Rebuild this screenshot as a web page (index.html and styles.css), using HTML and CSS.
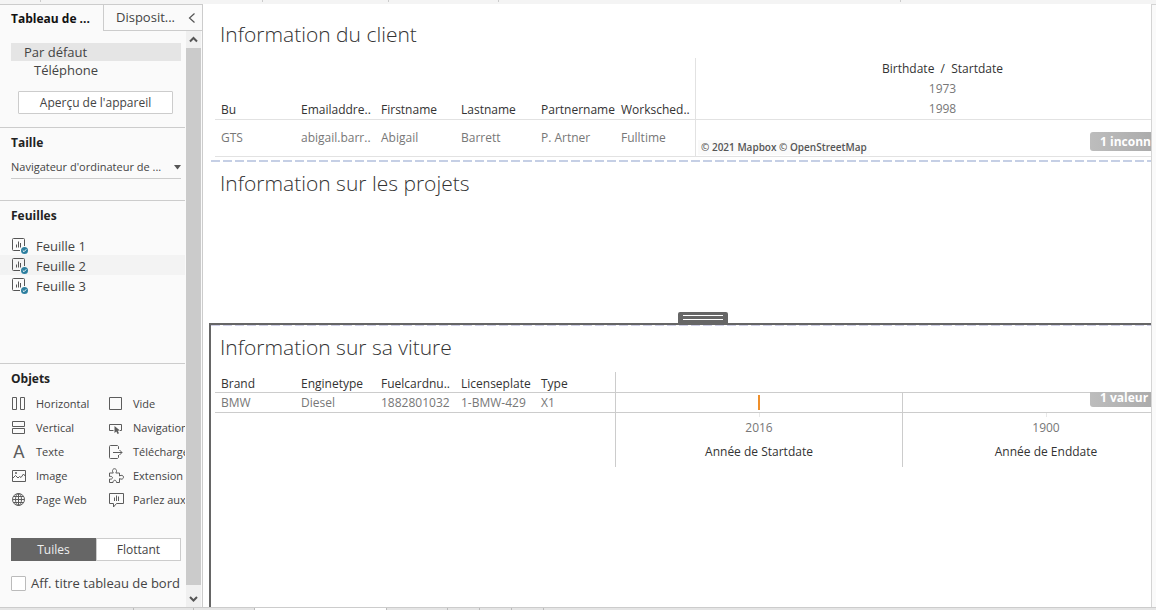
FILE: index.html
```html
<!DOCTYPE html>
<html lang="fr">
<head>
<meta charset="utf-8">
<title>Tableau de bord</title>
<link rel="stylesheet" href="styles.css">
</head>
<body>
<svg class="sprite" aria-hidden="true">
  <symbol id="sheet" viewBox="0 0 18 18">
    <path d="M9 13.500H2.500Q1.500 13.500 1.500 12.500V2.500Q1.500 1.500 2.500 1.500H12.500Q13.500 1.500 13.500 2.500V9" fill="none" stroke="#555"/>
    <path d="M5.500 10.500V7.500M7.500 10.500V4.500M9.500 10.500V6" fill="none" stroke="#555"/>
    <circle cx="13.500" cy="13.500" r="3.500" fill="#2d7f9f"/>
    <path d="M11.800 13.500L13 14.700L15.300 12.300" fill="none" stroke="#fff"/>
  </symbol>
</svg>
<div class="topstrip"><i class="w40"></i><i class="w222"></i><i class="w126"></i><i class="w110"></i><i class="w402"></i></div>
<div class="workspace">
  <aside class="sidebar">
    <div class="tabs">
      <button class="tab tab-on">Tableau de ...</button>
      <button class="tab tab-off">Disposit...</button>
      <button class="collapse" aria-label="Réduire"><svg width="8" height="10" viewBox="0 0 8 10"><path d="M6.500 .5L1.500 5L6.500 9.500" fill="none" stroke="#555" stroke-width="1.200"/></svg></button>
    </div>
    <div class="panel">
      <div class="content">
        <section class="devices">
          <button class="device device-on">Par défaut</button>
          <button class="device device-sub">Téléphone</button>
          <button class="preview">Aperçu de l'appareil</button>
        </section>
        <section class="size">
          <h2><label for="size">Taille</label></h2>
          <div class="selectbox">
            <select id="size"><option>Navigateur d'ordinateur de ...</option></select>
            <svg width="7" height="5" viewBox="0 0 7 5"><path d="M0 0H7L3.500 4.500Z" fill="#555"/></svg>
          </div>
        </section>
        <section class="sheets">
          <h2>Feuilles</h2>
          <button class="sheet"><svg width="18" height="18"><use href="#sheet"/></svg>Feuille 1</button>
          <button class="sheet sheet-on"><svg width="18" height="18"><use href="#sheet"/></svg>Feuille 2</button>
          <button class="sheet"><svg width="18" height="18"><use href="#sheet"/></svg>Feuille 3</button>
        </section>
        <section class="objects">
          <h2>Objets</h2>
          <div class="objgrid">
            <button class="obj"><svg width="16" height="16" viewBox="0 0 16 16"><path d="M1.500 1.500H5.500V13.500H1.500ZM9.500 1.500H13.500V13.500H9.500Z"/></svg>Horizontal</button>
            <button class="obj"><svg width="16" height="16" viewBox="0 0 16 16"><path d="M1.500 1.500H13.500V13.500H1.500Z"/></svg>Vide</button>
            <button class="obj"><svg width="16" height="16" viewBox="0 0 16 16"><path d="M1.500 1.500H13.500V6.500H1.500ZM1.500 8.500H13.500V13.500H1.500Z"/></svg>Vertical</button>
            <button class="obj"><svg width="16" height="16" viewBox="0 0 16 16"><path d="M5.500 10.500H1.500V4.500H13.500V10.500H12"/><path class="solid" d="M6.500 6L12 10.500L9.700 10.800L11 13.200L9.500 14L8.300 11.600L6.500 13Z"/></svg>Navigation</button>
            <button class="obj"><span class="glyph" aria-hidden="true">A</span>Texte</button>
            <button class="obj"><svg width="16" height="16" viewBox="0 0 16 16"><path d="M10.500 5V2.500L9.500 1.500H2.500Q1.500 1.500 1.500 2.500V13.500Q1.500 14.500 2.500 14.500H9.500L10.500 13.500V11M5 8.500H14M11.500 6L14 8.500L11.500 11"/></svg>Téléchargement</button>
            <button class="obj"><svg width="16" height="16" viewBox="0 0 16 16"><path d="M1.500 2.500H14.500V13.500H1.500ZM1.500 10.500L4.500 7.500L7 10L8.500 8.500L10 9.500L12.500 6L14.500 8.500"/><circle class="solid" cx="5" cy="5" r="1"/></svg>Image</button>
            <button class="obj"><svg width="16" height="16" viewBox="0 0 16 16"><path d="M1.500 5H5.300C3.500 2.500 5 .7 6.500 .7S9.500 2.500 7.800 5H11.500V8C13.500 6.500 15.500 7.500 15.500 9.200S13.500 12 11.500 10.500V14.500H8.500C8.500 11.500 5 11.500 5 14.500H1.500V11C5.500 12 5.500 7.500 1.500 8.500Z"/></svg>Extension</button>
            <button class="obj"><svg width="16" height="16" viewBox="0 0 16 16"><circle cx="7.500" cy="7.500" r="6"/><ellipse cx="7.500" cy="7.500" rx="3" ry="6"/><path d="M7.500 1.500V13.500M1.500 7.500H13.500M2.500 4.500H12.500M2.500 10.500H12.500"/></svg>Page Web</button>
            <button class="obj"><svg width="16" height="16" viewBox="0 0 16 16"><path d="M1.500 1.500H15.500V11.500H8.500L5.500 15V11.500H1.500ZM6.500 9V5.500M8.500 9V3.500M10.500 9V4.500"/></svg>Parlez aux données</button>
          </div>
          <div class="segment"><button class="seg seg-on">Tuiles</button><button class="seg">Flottant</button></div>
          <label class="check"><input type="checkbox">Aff. titre tableau de bord</label>
        </section>
      </div>
      <div class="scrollbar">
        <svg width="15" height="17" viewBox="0 0 15 17"><path d="M4 10.500L7.500 7L11 10.500" fill="none" stroke="#555" stroke-width="2"/></svg>
        <div class="thumb"></div>
        <svg width="15" height="22" viewBox="0 0 15 22"><path d="M4 12L7.500 15.500L11 12" fill="none" stroke="#555" stroke-width="2"/></svg>
      </div>
    </div>
  </aside>
  <main class="dashboard">
    <section class="zone client">
      <h1>Information du client</h1>
      <table class="grid light">
        <colgroup><col class="dim"><col class="dim"><col class="dim"><col class="dim"><col class="dim"><col class="dim"><col></colgroup>
        <thead><tr><th>Bu</th><th>Emailaddre..</th><th>Firstname</th><th>Lastname</th><th>Partnername</th><th>Worksched..</th>
          <th class="chart years">Birthdate&nbsp; /&nbsp; Startdate<span>1973</span><span>1998</span></th></tr></thead>
        <tbody><tr><td>GTS</td><td>abigail.barr..</td><td>Abigail</td><td>Barrett</td><td>P. Artner</td><td>Fulltime</td>
          <td class="chart map"><small>© 2021 Mapbox © OpenStreetMap</small></td></tr></tbody>
      </table>
      <span class="badge badge-client">1 inconnu</span>
    </section>
    <section class="zone projects">
      <h1>Information sur les projets</h1>
    </section>
    <section class="zone car">
      <div class="handle"></div>
      <div class="clip">
        <h1>Information sur sa viture</h1>
        <table class="grid dark">
          <colgroup><col class="dim"><col class="dim"><col class="dim"><col class="dim"><col class="dim"><col><col></colgroup>
          <thead><tr><th>Brand</th><th>Enginetype</th><th>Fuelcardnu..</th><th>Licenseplate</th><th>Type</th><th class="chart" colspan="2"></th></tr></thead>
          <tbody>
            <tr><td>BMW</td><td>Diesel</td><td>1882801032</td><td>1-BMW-429</td><td>X1</td><td class="chart mark"><div class="tick"></div></td><td class="chart"></td></tr>
            <tr class="axis"><td colspan="5"></td><td class="chart"><span>2016</span><b>Année de Startdate</b></td><td class="chart"><span>1900</span><b>Année de Enddate</b></td></tr>
          </tbody>
        </table>
        <span class="badge badge-car">1 valeur</span>
      </div>
    </section>
  </main>
  <div class="gutter"></div>
</div>
<div class="sheetstrip"><i class="s134"></i><i class="s60"></i><i class="s61"></i><i class="active"></i><i class="s61"></i><i class="s32"></i><i class="s32"></i><i class="s32"></i></div>
</body>
</html>
```
FILE: styles.css
```css
* { box-sizing: border-box; }
body {
  margin: 0;
  height: 100vh;
  display: flex;
  flex-direction: column;
  overflow: hidden;
  background: #fff;
  color: #444;
  font: 13px/20px "Open Sans", "Noto Sans", sans-serif;
}
button, select, input { font: inherit; color: inherit; margin: 0; }
button { border: 0; background: none; padding: 0; text-align: left; white-space: nowrap; }
h1, h2 { margin: 0; }
.sprite { position: absolute; width: 0; height: 0; }

.topstrip { display: flex; flex: none; height: 4px; background: #f4f4f4; }
.topstrip i { height: 2px; border-right: 1px solid #ccc; }
.w40 { width: 41px; }
.w222 { width: 222px; }
.w126 { width: 126px; }
.w110 { width: 110px; }
.w402 { width: 402px; }

.workspace { display: flex; flex: 1; min-height: 0; }
.gutter { width: 5px; flex: none; border: solid #d4d4d4; border-width: 1px 0 0 1px; background: #fafafa; }

.sidebar {
  width: 203px;
  flex: none;
  display: flex;
  flex-direction: column;
  background: #fafafa;
  border: solid #ccc;
  border-width: 1px 1px 0 0;
}
.tabs { display: flex; height: 26px; flex: none; }
.tab { line-height: 25px; }
.tab-on { width: 103px; padding-left: 11px; font-weight: 700; color: #111; font-size: 12px; }
.tab-off { flex: 1; padding-left: 12px; border: solid #ccc; border-width: 0 0 1px 1px; }
.collapse { width: 15px; padding-left: 1px; border-bottom: 1px solid #ccc; }
.panel { display: flex; flex: 1; min-height: 0; }
.content { flex: 1; min-width: 0; overflow: hidden; margin-right: 1px; }
.scrollbar { width: 16px; flex: none; display: flex; flex-direction: column; background: #f0f0f0; border-right: 1px solid #fafafa; }
.thumb { flex: 1; background: #cbcbcb; }
.scrollbar svg { display: block; flex: none; }

h2 { font-size: 12px; line-height: 20px; font-weight: 700; color: #222; padding-left: 11px; }
.devices { padding: 12px 4px 13px 11px; display: flex; flex-direction: column; }
.device { height: 18px; line-height: 18px; padding-left: 13px; font-size: 13px; }
.device-on { background: #e5e5e5; }
.device-sub { padding-left: 23px; }
.preview {
  height: 23px;
  margin: 12px 8px 0 7px;
  border: 1px solid #ccc;
  border-radius: 1px;
  background: #fff;
  text-align: center;
  font-size: 12px;
}
.size { border-top: 1px solid #ccc; height: 73px; padding-top: 5px; }
.selectbox {
  display: flex;
  align-items: center;
  margin: 3px 4px 0 11px;
  height: 23px;
  border-bottom: 1px solid #ccc;
}
.selectbox select { appearance: none; flex: 1; min-width: 0; border: 0; background: none; padding: 0; font-size: 11px; }
.sheets { border-top: 1px solid #ccc; height: 163px; padding-top: 5px; }
.sheets h2 { margin-bottom: 9px; }
.sheet { display: flex; align-items: center; width: 100%; height: 20px; padding: 1px 0 0 11px; gap: 7px; font-size: 13px; line-height: 16px; }
.sheet-on { background: #f3f3f3; }
.objects { border-top: 1px solid #ccc; padding-top: 5px; }
.objgrid { display: grid; grid-template-columns: 97px 1fr; margin: 3px 0 26px 11px; }
.obj { display: flex; align-items: center; height: 24px; gap: 9px; min-width: 0; overflow: hidden; font-size: 11px; }
.obj svg { flex: none; fill: none; stroke: #5c5c5c; }
.obj svg .solid { fill: #5c5c5c; stroke: none; }
.glyph { width: 16px; font: 18px/24px Roboto, sans-serif; color: #5c5c5c; padding-left: 2px; }
.segment { display: flex; margin: 0 4px 0 11px; }
.seg { flex: 1; height: 23px; text-align: center; border: 1px solid #ccc; background: #fff; font-size: 12px; }
.seg-on { background: #666; border-color: #666; color: #eee; }
.check { display: flex; align-items: center; gap: 5px; margin: 12px 0 0 11px; white-space: nowrap; font-size: 13px; }
.check input { appearance: none; flex: none; width: 15px; height: 15px; border: 1px solid #bbb; border-radius: 1px; background: #fff; }

.dashboard { flex: 1; min-width: 0; display: flex; flex-direction: column; padding-left: 6px; }
.zone { position: relative; }
.dashboard h1 { font-size: 21px; line-height: 26px; padding: 0 0 2px 9px; font-weight: 300; color: #333; }
.client, .projects { margin-left: 2px; padding-top: 17px; overflow: hidden; }
.client { height: 158px; background: repeating-linear-gradient(90deg, #c5cfe5 0 9px, #fff 9px 12px) 0 100% / 100% 2px no-repeat; }
.projects { height: 161px; padding-top: 8px; }
.car { flex: 1; min-height: 0; border: solid #666; border-width: 2px 0 0 2px; }
.clip {
  position: relative;
  height: 100%;
  overflow: hidden;
  padding-top: 9px;
  background: repeating-linear-gradient(90deg, #cfcfe6 0 9px, #fff 9px 12px) 0 0 / 100% 1px no-repeat;
}
.handle {
  position: absolute;
  left: 50%;
  top: -13px;
  width: 50px;
  height: 11px;
  margin-left: -3px;
  border: solid #666;
  border-width: 3px 5px;
  border-radius: 2px 2px 0 0;
  background: linear-gradient(#fff 1px, #666 1px 4px, #fff 4px);
}
.grid { table-layout: fixed; border-spacing: 0; width: calc(100% + 34px); margin-left: 4px; font-size: 12px; line-height: 20px; }
.dim { width: 80px; }
.grid th, .grid td { padding: 0 0 0 6px; text-align: left; white-space: nowrap; font-weight: 400; color: #777; border-bottom: 1px solid #e2e2e2; }
.grid th { vertical-align: bottom; font-weight: 500; color: #333; }
.grid .chart { padding: 0; border-left: 1px solid #e2e2e2; text-align: center; }
.light { margin-top: 9px; }
.light th { height: 62px; }
.light th:not(.chart) { line-height: 18px; }
.light td { height: 37px; }
.grid .years { padding-top: 1px; line-height: 20px; }
.years span { display: block; font-weight: 400; color: #777; }
.grid .map { text-align: left; vertical-align: bottom; padding: 0 0 1px 2px; line-height: 15px; }
.map small { display: inline-block; padding: 0 3px; font: 600 10px/15px "Open Sans", sans-serif; color: #555; background: #fafafa; }
.badge {
  position: absolute;
  right: 0;
  width: 61px;
  height: 19px;
  padding-left: 10px;
  overflow: hidden;
  white-space: nowrap;
  border-radius: 3px 0 0 3px;
  background: linear-gradient(90deg, #bdbdbd, #acacac);
  color: #fff;
  font-size: 12px;
  font-weight: 700;
  line-height: 19px;
}
.badge-client { top: 128px; }
.badge-car { top: 67px; height: 15px; line-height: 12px; border-radius: 0 0 0 3px; }
.dark { margin-top: 10px; }
.dark th { height: 21px; line-height: 16px; }
.dark tbody tr:first-child td { height: 20px; line-height: 19px; }
.grid.dark th, .grid.dark td { border-color: #ccc; }
.tick { width: 2px; height: 15px; margin: 2px auto; background: #ef8f2a; }
.grid .axis td { height: 54px; border-bottom: 0; vertical-align: top; padding-top: 0; line-height: 24px; }
.axis .chart { background: linear-gradient(#e8e8e8, #e8e8e8) 50% 0 / 1px 4px no-repeat; }
.axis span, .axis b { display: block; }
.axis span { padding-top: 3px; }
.axis b { font-weight: 500; color: #333; }

.sheetstrip { display: flex; flex: none; height: 3px; background: #e5e5e5; border-top: 1px solid #ccc; }
.sheetstrip i { border-right: 1px solid #bbb; }
.s134 { width: 134px; }
.s60 { width: 60px; }
.s61 { width: 61px; }
.s32 { width: 32px; }
.active { width: 132px; background: #fff; }
```
